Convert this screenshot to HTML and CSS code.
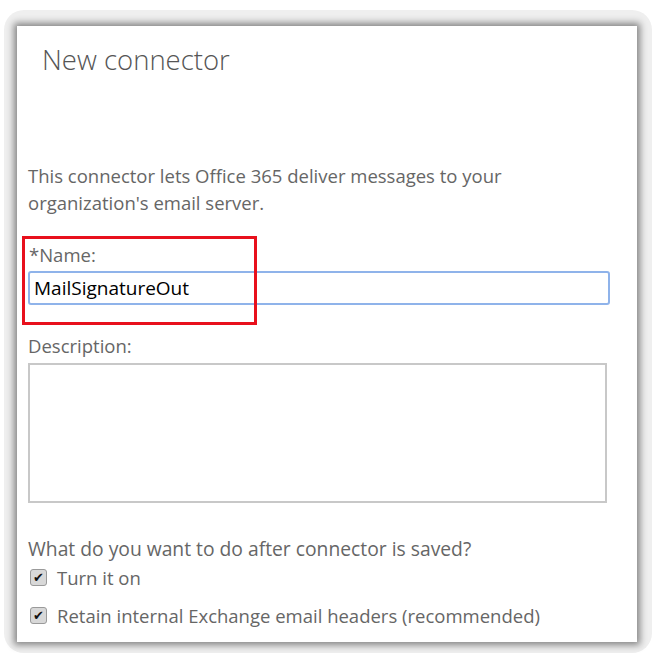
FILE: index.html
```html
<!DOCTYPE html>
<html lang="en">
<head>
    <meta charset="UTF-8">
    <title>New connector</title>
    <link rel="stylesheet" href="styles.css">
</head>
<body>
    <div class="frame">
        <div class="panel">
            <h1>New connector</h1>

            <p class="intro">This connector lets Office 365 deliver messages to your organization's email server.</p>

            <div class="highlight">
                <label for="name">*Name:</label>
            </div>
            <input type="text" id="name" class="name-input" value="MailSignatureOut">

            <label for="description" class="desc-label">Description:</label>
            <textarea id="description"></textarea>

            <p class="question">What do you want to do after connector is saved?</p>
            <div class="check">
                <span class="box">&#10004;</span>
                <span>Turn it on</span>
            </div>
            <div class="check">
                <span class="box">&#10004;</span>
                <span>Retain internal Exchange email headers (recommended)</span>
            </div>
        </div>
    </div>
</body>
</html>
```

FILE: styles.css
```css
body {
    margin: 0;
    background: #ffffff;
    font-family: "Open Sans", "Noto Sans", sans-serif;
}

.frame {
    margin: 10px 3px 0 4px;
    height: 643px;
    box-sizing: border-box;
    padding: 16px 15px 11px 13px;
    background: #efefef;
    border-radius: 20px;
}

.panel {
    position: relative;
    height: 100%;
    background: #fff;
    box-shadow: 0 0 7px 3px rgba(0, 0, 0, 0.45);
    padding: 0 0 0 11px;
    color: #666;
    display: flex;
    flex-direction: column;
}

h1 {
    margin: 15px 0 0 14px;
    font-weight: 300;
    font-size: 27.5px;
    color: #555;
}

.intro {
    margin: 84px 0 0 0;
    font-size: 18.5px;
    line-height: 27px;
    width: 500px;
}

.highlight {
    position: absolute;
    left: 5px;
    top: 210px;
    width: 229px;
    height: 83px;
    border: 3px solid #e8101c;
}

.highlight label {
    position: absolute;
    left: 4px;
    top: 3px;
    font-size: 18.5px;
}

.name-input {
    margin: 55px 0 0 0;
    width: 582px;
    height: 34px;
    box-sizing: border-box;
    border: 2px solid #8fb3ea;
    border-radius: 3px;
    padding: 0 4px;
    font-family: "Open Sans", sans-serif;
    font-weight: 500;
    font-size: 19px;
    color: #000;
    outline: none;
}

.desc-label {
    margin-top: 28px;
    font-size: 18.5px;
}

textarea {
    margin-top: 5px;
    width: 579px;
    height: 140px;
    box-sizing: border-box;
    border: 2px solid #c8c8c8;
    resize: none;
}

.question {
    margin: 32px 0 0 0;
    font-size: 19.3px;
}

.check {
    display: flex;
    align-items: center;
    gap: 10px;
    margin-top: 3px;
    font-size: 18.5px;
}

.check + .check {
    margin-top: 13px;
}

.box {
    width: 17px;
    height: 17px;
    box-sizing: border-box;
    border: 1px solid #9a9a9a;
    border-radius: 3px;
    background: #d8d8d8;
    color: #111;
    font-size: 13px;
    line-height: 15px;
    text-align: center;
    margin-left: 2px;
}
```
